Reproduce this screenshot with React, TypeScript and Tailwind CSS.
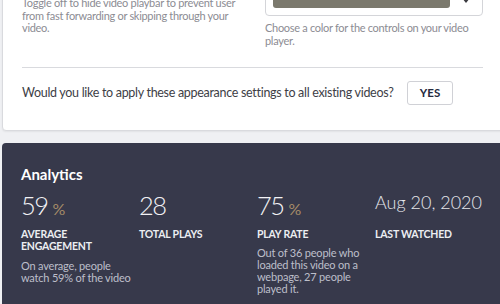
const stats = [
  {
    value: '59',
    unit: '%',
    label: 'Average Engagement',
    note: 'On average, people watch 59% of the video',
  },
  { value: '28', label: 'Total Plays' },
  {
    value: '75',
    unit: '%',
    label: 'Play Rate',
    note: 'Out of 36 people who loaded this video on a webpage, 27 people played it.',
  },
  { value: 'Aug 20, 2020', label: 'Last Watched', isDate: true },
];

function StatBlock({ stat }: { stat: (typeof stats)[number] }) {
  return (
    <div className="flex flex-col">
      {stat.isDate ? (
        <div className="h-[28px] text-[18px] leading-[22px] font-light text-[#e6e7ec]">{stat.value}</div>
      ) : (
        <div className="h-[28px] flex items-baseline leading-[28px]">
          <span className="text-[25.5px] font-light tracking-[-1.5px] text-[#f2f2f5]">{stat.value}</span>
          {stat.unit && <span className="ml-[5px] text-[16px] font-normal text-[#a68c68]">{stat.unit}</span>}
        </div>
      )}
      <div className="mt-[8.5px] w-[100px] text-[10.5px] leading-[12.5px] font-bold uppercase tracking-[-0.2px] text-[#eceef2]">
        {stat.label}
      </div>
      {stat.note && (
        <p className="mt-[7px] w-[110px] text-[11px] leading-[12px] tracking-[-0.2px] text-[#bdbfca]">{stat.note}</p>
      )}
    </div>
  );
}

export default function App() {
  return (
    <div
      className="w-[500px] h-[304px] overflow-hidden bg-[#eff0f3]"
      style={{ fontFamily: "Lato, 'Open Sans', sans-serif" }}
    >
      {/* Appearance card (scrolled, top cut off) */}
      <div className="-mt-[40px] ml-[2px] w-[510px] bg-white border border-[#d9dade] rounded-[4px] shadow-[0_1px_2px_rgba(0,0,0,0.06)] pl-[19px] pt-[11px] pb-[25px]">
        <div className="flex">
          <div className="w-[243px] pt-[25px]">
            <p className="w-[225px] text-[11px] leading-[12.5px] tracking-[-0.3px] text-[#8c8c93]">
              Toggle off to hide video playbar to prevent user from fast forwarding or skipping through your video.
            </p>
          </div>
          <div className="w-[218px]">
            <div className="h-[44px] border border-[#d4d5d9] rounded-[4px] flex items-end pl-[7px] pb-[7px]">
              <div className="w-[177px] h-[30px] rounded-[3px] bg-[#7b796d]" />
              <div className="flex-1 flex justify-center self-end mb-[5px]">
                <svg width="8" height="5" viewBox="0 0 8 5">
                  <path d="M0 0h8L4 5z" fill="#3a3a40" />
                </svg>
              </div>
            </div>
            <p className="mt-[5px] text-[11px] leading-[13px] tracking-[-0.3px] text-[#8c8c93]">
              Choose a color for the controls on your video player.
            </p>
          </div>
        </div>

        <div className="mt-[20px] w-[461px] h-px bg-[#d9dade]" />

        <div className="mt-[13px] flex items-center">
          <span className="w-[385px] text-[12.5px] leading-[18px] tracking-[-0.3px] text-[#3d3e46]">
            Would you like to apply these appearance settings to all existing videos?
          </span>
          <button className="w-[46px] h-[24px] border border-[#d0d1d6] rounded-[3px] bg-white text-[11.5px] font-bold text-[#262a40]">
            YES
          </button>
        </div>
      </div>

      {/* Analytics panel */}
      <div className="mt-[12px] ml-[2px] w-[510px] h-[180px] bg-[#37394b] rounded-tl-[4px] pl-[19px] pt-[22px]">
        <h2 className="text-[15px] leading-[18px] font-bold text-white">Analytics</h2>
        <div className="mt-[8px] grid grid-cols-[118px_118px_118px_118px]">
          {stats.map((s) => (
            <StatBlock key={s.label} stat={s} />
          ))}
        </div>
      </div>
    </div>
  );
}
